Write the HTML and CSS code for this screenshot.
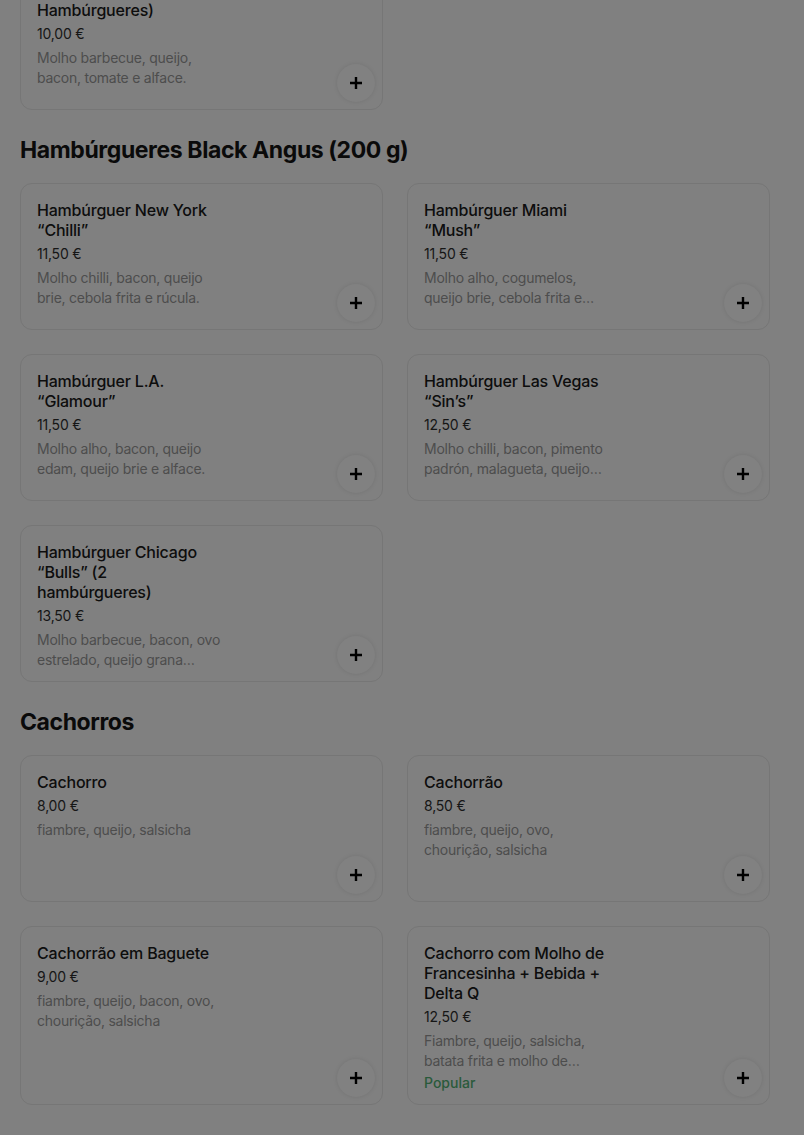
FILE: index.html
```html
<!DOCTYPE html>
<html lang="pt">
<head>
<meta charset="utf-8">
<title>Menu</title>
<link rel="stylesheet" href="styles.css">
</head>
<body>
<main class="page">
  <section class="section section-first">
    <div class="grid">
      <article class="card">
        <div class="info">
          <h3 class="title">Hambúrguer Duplo (2 Hambúrgueres)</h3>
          <div class="price">10,00 €</div>
          <p class="desc">Molho barbecue, queijo, bacon, tomate e alface.</p>
        </div>
        <button class="add" aria-label="Adicionar"><svg viewBox="0 0 12 12" width="12" height="12"><path d="M6 0V12M0 6H12"/></svg></button>
      </article>
    </div>
  </section>

  <section class="section">
    <h2 class="heading">Hambúrgueres Black Angus (200 g)</h2>
    <div class="grid">
      <article class="card">
        <div class="info">
          <h3 class="title">Hambúrguer New York “Chilli”</h3>
          <div class="price">11,50 €</div>
          <p class="desc">Molho chilli, bacon, queijo brie, cebola frita e rúcula.</p>
        </div>
        <button class="add" aria-label="Adicionar"><svg viewBox="0 0 12 12" width="12" height="12"><path d="M6 0V12M0 6H12"/></svg></button>
      </article>
      <article class="card">
        <div class="info">
          <h3 class="title">Hambúrguer Miami “Mush”</h3>
          <div class="price">11,50 €</div>
          <p class="desc">Molho alho, cogumelos, queijo brie, cebola frita e rúcula.</p>
        </div>
        <button class="add" aria-label="Adicionar"><svg viewBox="0 0 12 12" width="12" height="12"><path d="M6 0V12M0 6H12"/></svg></button>
      </article>
      <article class="card">
        <div class="info">
          <h3 class="title">Hambúrguer L.A. “Glamour”</h3>
          <div class="price">11,50 €</div>
          <p class="desc">Molho alho, bacon, queijo edam, queijo brie e alface.</p>
        </div>
        <button class="add" aria-label="Adicionar"><svg viewBox="0 0 12 12" width="12" height="12"><path d="M6 0V12M0 6H12"/></svg></button>
      </article>
      <article class="card">
        <div class="info">
          <h3 class="title">Hambúrguer Las Vegas “Sin’s”</h3>
          <div class="price">12,50 €</div>
          <p class="desc">Molho chilli, bacon, pimento padrón, malagueta, queijo cheddar e rúcula.</p>
        </div>
        <button class="add" aria-label="Adicionar"><svg viewBox="0 0 12 12" width="12" height="12"><path d="M6 0V12M0 6H12"/></svg></button>
      </article>
      <article class="card">
        <div class="info">
          <h3 class="title">Hambúrguer Chicago “Bulls” (2 hambúrgueres)</h3>
          <div class="price">13,50 €</div>
          <p class="desc">Molho barbecue, bacon, ovo estrelado, queijo grana padano e alface.</p>
        </div>
        <button class="add" aria-label="Adicionar"><svg viewBox="0 0 12 12" width="12" height="12"><path d="M6 0V12M0 6H12"/></svg></button>
      </article>
    </div>
  </section>

  <section class="section">
    <h2 class="heading">Cachorros</h2>
    <div class="grid">
      <article class="card">
        <div class="info">
          <h3 class="title">Cachorro</h3>
          <div class="price">8,00 €</div>
          <p class="desc">fiambre, queijo, salsicha</p>
        </div>
        <button class="add" aria-label="Adicionar"><svg viewBox="0 0 12 12" width="12" height="12"><path d="M6 0V12M0 6H12"/></svg></button>
      </article>
      <article class="card">
        <div class="info">
          <h3 class="title">Cachorrão</h3>
          <div class="price">8,50 €</div>
          <p class="desc">fiambre, queijo, ovo, chourição, salsicha</p>
        </div>
        <button class="add" aria-label="Adicionar"><svg viewBox="0 0 12 12" width="12" height="12"><path d="M6 0V12M0 6H12"/></svg></button>
      </article>
      <article class="card">
        <div class="info">
          <h3 class="title">Cachorrão em Baguete</h3>
          <div class="price">9,00 €</div>
          <p class="desc">fiambre, queijo, bacon, ovo, chourição, salsicha</p>
        </div>
        <button class="add" aria-label="Adicionar"><svg viewBox="0 0 12 12" width="12" height="12"><path d="M6 0V12M0 6H12"/></svg></button>
      </article>
      <article class="card">
        <div class="info">
          <h3 class="title">Cachorro com Molho de Francesinha + Bebida + Delta Q</h3>
          <div class="price">12,50 €</div>
          <p class="desc">Fiambre, queijo, salsicha, batata frita e molho de francesinha.</p>
          <div class="tag">Popular</div>
        </div>
        <button class="add" aria-label="Adicionar"><svg viewBox="0 0 12 12" width="12" height="12"><path d="M6 0V12M0 6H12"/></svg></button>
      </article>
    </div>
  </section>

  <section class="section">
    <h2 class="heading">Bebidas</h2>
  </section>
</main>
</body>
</html>
```

FILE: styles.css
```css
* { box-sizing: border-box; }

html, body {
  margin: 0;
  padding: 0;
  background: #808080;
}

body {
  font-family: Inter, "Noto Sans", "Liberation Sans", sans-serif;
  color: #0f0f0f;
  overflow: hidden;
}

.page {
  padding: 0 34px 0 20px;
  margin-top: -37px;
}

.heading {
  margin: 24px 0 17px;
  font-size: 23px;
  line-height: 32px;
  font-weight: 700;
  letter-spacing: -0.4px;
  color: #0a0a0a;
}

.grid {
  display: grid;
  grid-template-columns: 1fr 1fr;
  column-gap: 24px;
  row-gap: 24px;
}

.card {
  position: relative;
  min-height: 147px;
  padding: 16px 16px 11px;
  border: 1px solid #767676;
  border-radius: 12px;
  background: #808080;
}

.info {
  width: 186px;
}

.title {
  margin: 0;
  font-size: 16px;
  line-height: 20px;
  font-weight: 500;
  letter-spacing: -0.2px;
  color: #0d0d0d;
}

.price {
  margin-top: 4px;
  font-size: 14px;
  line-height: 20px;
  letter-spacing: -0.2px;
  color: #161616;
}

.desc {
  margin: 4px 0 0;
  font-size: 14px;
  line-height: 20px;
  letter-spacing: -0.25px;
  color: #4d4d4d;
  display: -webkit-box;
  -webkit-line-clamp: 2;
  -webkit-box-orient: vertical;
  overflow: hidden;
}

.tag {
  margin-top: 2px;
  font-size: 14px;
  line-height: 20px;
  font-weight: 500;
  color: #2a5a3b;
}

.add {
  position: absolute;
  right: 7px;
  bottom: 7px;
  width: 38px;
  height: 38px;
  padding: 0;
  border: none;
  border-radius: 50%;
  background: #818181;
  box-shadow: 0 0 4px rgba(0, 0, 0, 0.1);
  display: flex;
  align-items: center;
  justify-content: center;
}

.add svg {
  display: block;
}

.add path {
  stroke: #000;
  stroke-width: 2.4;
  fill: none;
}
```
